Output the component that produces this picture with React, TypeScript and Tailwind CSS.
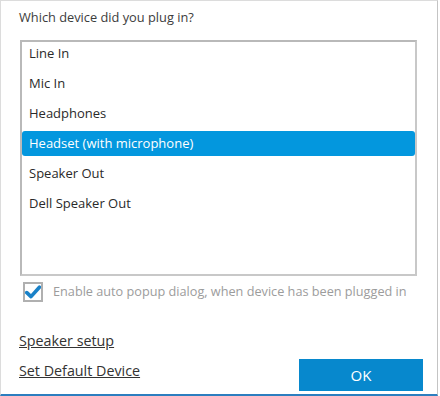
import React from "react";

const devices = [
  "Line In",
  "Mic In",
  "Headphones",
  "Headset (with microphone)",
  "Speaker Out",
  "Dell Speaker Out",
];

function CheckMark() {
  return (
    <svg width="16" height="16" viewBox="0 0 16 16">
      <path
        d="M1.8 8.6 L6 12.6 L14.4 3.2"
        fill="none"
        stroke="#1a82c8"
        strokeWidth="3.6"
        strokeLinecap="round"
        strokeLinejoin="round"
      />
    </svg>
  );
}

export default function App() {
  const selected = 3;
  return (
    <div
      className="flex h-[396px] w-[440px] bg-white text-[13px] text-[#333]"
      style={{ fontFamily: '"Segoe UI", "Open Sans", sans-serif' }}
    >
      <div className="flex h-full w-[438px] flex-col border-l border-t border-r border-b-2 border-l-[#dcdcdc] border-t-[#dcdcdc] border-r-[#c4c4c4] border-b-[#2c7ebf] bg-white">
        <div className="pl-[18px] pt-[6px] text-[12.8px] leading-[20px] text-[#3c3c3c]">
          Which device did you plug in?
        </div>

        <div className="ml-[19px] mt-[13px] flex h-[236px] w-[397px] flex-col gap-[5px] border-2 border-[#b9b9b9] border-r-[#c8c8c8] border-b-[#c8c8c8]">
          {devices.map((d, i) => (
            <div
              key={d}
              className={
                "flex h-[25px] shrink-0 items-center rounded-[3px] pl-[7px] first:-mt-[1px] " +
                (i === selected ? "bg-[#0397de] text-white" : "text-[#2a2a2a]")
              }
            >
              {d}
            </div>
          ))}
        </div>

        <div className="ml-[22px] mt-[6px] flex items-center gap-[10px]">
          <div className="flex h-[20px] w-[20px] items-center justify-center border-2 border-[#b0b0b0] bg-white">
            <CheckMark />
          </div>
          <span className="text-[12.7px] text-[#9c9c9c]">
            Enable auto popup dialog, when device has been plugged in
          </span>
        </div>

        <div className="mt-auto flex items-end justify-between pb-[3px] pl-[18px] pr-[14px]">
          <div className="flex flex-col gap-[10px] pb-[10px] text-[14.3px]">
            <a className="cursor-pointer leading-[20px] text-[#333] underline">
              Speaker setup
            </a>
            <a className="cursor-pointer leading-[20px] text-[#333] underline">
              Set Default Device
            </a>
          </div>
          <button className="h-[32px] w-[124px] bg-[#0788cd] text-[15px] text-white">
            OK
          </button>
        </div>
      </div>
    </div>
  );
}
